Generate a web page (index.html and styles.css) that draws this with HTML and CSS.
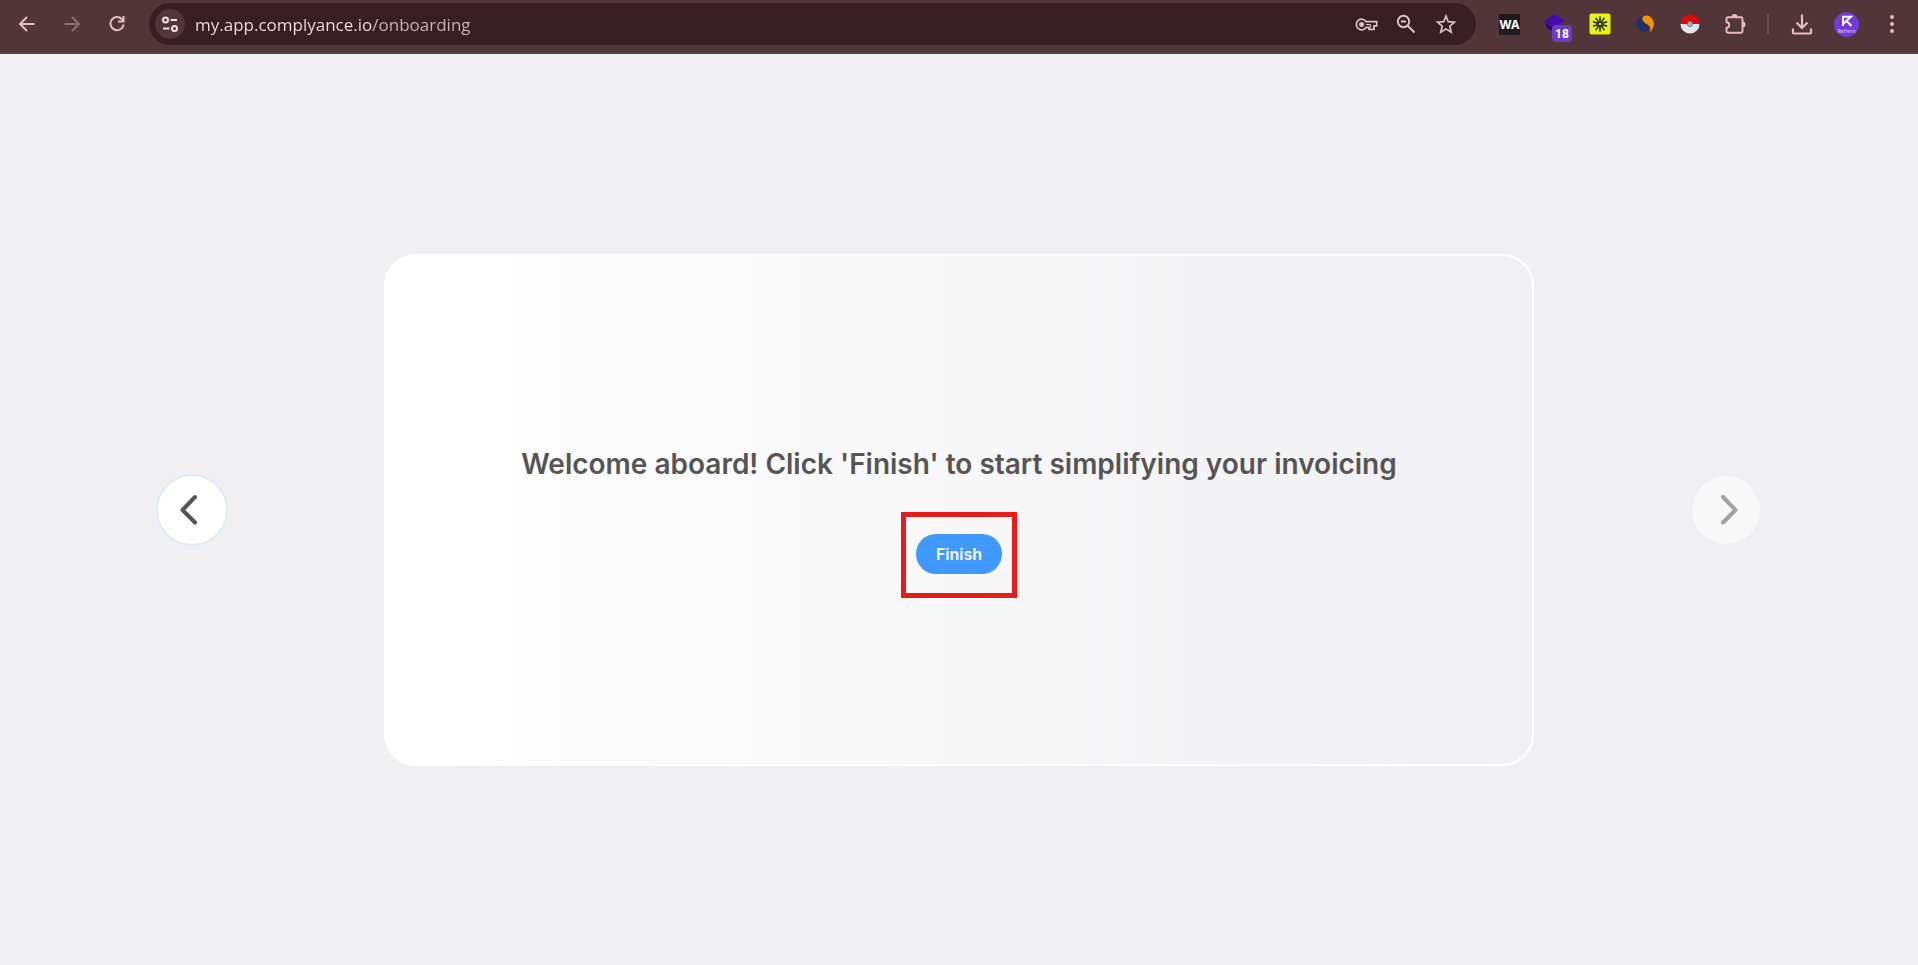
FILE: index.html
```html
<!DOCTYPE html>
<html lang="en">
<head>
<meta charset="utf-8">
<title>Onboarding</title>
<link rel="stylesheet" href="styles.css">
</head>
<body>
<header class="toolbar">
    <button class="tool-btn" aria-label="Back">
        <svg width="24" height="24" viewBox="0 0 24 24"><path d="M19.5 12H5.5M12 5l-7 7 7 7" fill="none" stroke="currentColor" stroke-width="2"/></svg>
    </button>
    <button class="tool-btn dim" aria-label="Forward" disabled>
        <svg width="24" height="24" viewBox="0 0 24 24"><path d="M4.5 12h14M12 5l7 7-7 7" fill="none" stroke="currentColor" stroke-width="2"/></svg>
    </button>
    <button class="tool-btn" aria-label="Reload">
        <svg width="24" height="24" viewBox="0 0 24 24"><path d="M18.6 12.5a6.600 6.600 0 1 1-1.800-5.500l2 2" fill="none" stroke="currentColor" stroke-width="2"/><path d="M19.5 4v6.500H13v-2h4.500V4z" fill="currentColor"/></svg>
    </button>

    <div class="omnibox">
        <button class="site-info" aria-label="Site information">
            <svg width="18" height="18" viewBox="0 0 18 18" fill="none" stroke="currentColor" stroke-width="2"><circle cx="4.5" cy="5" r="2.5"/><path d="M9.5 5H16M2 13.5h6.5"/><circle cx="13.5" cy="13.5" r="2.5"/></svg>
        </button>
        <input class="url" type="text" aria-label="Address" value="my.app.complyance.io/onboarding" spellcheck="false">
        <button class="omni-btn" aria-label="Passwords">
            <svg width="24" height="24" viewBox="0 0 24 24"><path d="M12.2 9.7A5.3 5.3 0 1 0 12.2 15.3H15v2h5v-3.5h2.700V9.7z" fill="none" stroke="currentColor" stroke-width="1.7"/><circle cx="7.6" cy="12.5" r="2.5" fill="currentColor"/><path d="M12 12.5h4.500v3" fill="none" stroke="currentColor" stroke-width="1"/></svg>
        </button>
        <button class="omni-btn" aria-label="Zoom">
            <svg width="24" height="24" viewBox="0 0 24 24" fill="none" stroke="currentColor" stroke-width="1.9"><circle cx="9.5" cy="9.5" r="5.7"/><path d="M13.5 13.5l7 7M7 9.5h5"/></svg>
        </button>
        <button class="omni-btn" aria-label="Bookmark">
            <svg width="24" height="24" viewBox="0 0 24 24"><path d="M12 4l2.300 5.700 6.100.5-4.600 4 1.400 5.900L12 16.900l-5.200 3.200 1.400-5.900-4.600-4 6.100-.5z" fill="none" stroke="currentColor" stroke-width="1.7"/></svg>
        </button>
    </div>

    <div class="extensions">
        <button class="tool-btn" aria-label="WA extension"><span class="wa-icon">WA</span></button>
        <button class="tool-btn" aria-label="Layers extension">
            <svg width="24" height="24" viewBox="0 0 24 24"><path d="M2.5 11l9 5 8-4v3l-8 5-8-4z" fill="#300487"/><path d="M11 2l10.500 6.500L12 15.500 1 9.500z" fill="#4a05b4"/></svg>
            <span class="ext-badge">18</span>
        </button>
        <button class="tool-btn" aria-label="Spark extension">
            <svg width="22" height="22" viewBox="0 0 22 22"><rect x=".5" y=".5" width="21" height="21" rx="2" fill="#e6f60e"/><path d="M11 3.500v15M6.600 4.900l8.800 12.200M15.400 4.900L6.600 17.100M3.900 8.700l14.200 4.600M18.100 8.700L3.900 13.300" fill="none" stroke="#20220d" stroke-width="1.6"/><circle cx="11" cy="11" r="1.2" fill="#e6f60e"/></svg>
        </button>
        <button class="tool-btn" aria-label="Swirl extension">
            <svg width="20" height="20" viewBox="0 0 20 20"><path d="M6.500 2C1 4 0 9 1.500 13s7 6.500 11 4c2-1.500 2-4.500 0-6C9.500 9 5 7.500 6.500 2z" fill="#26305f"/><path d="M7.500 4C8 1 13 .5 16 3.500c4.500 4 3.500 11-1.500 15 2-4 .5-6.500-2-8C9.500 9 7 7 7.500 4z" fill="#f39208"/></svg>
        </button>
        <button class="tool-btn" aria-label="Ball extension">
            <svg width="20" height="20" viewBox="0 0 20 20"><path d="M.5 10a9.500 9.500 0 0 1 19 0z" fill="#dc0b0b"/><path d="M.5 10a9.500 9.500 0 0 0 19 0z" fill="#dfe7ec"/><circle cx="10" cy="10" r="2.5" fill="#cfd8dc" stroke="#5f6b70"/><circle cx="10" cy="10" r="1" fill="#78868c"/></svg>
        </button>
        <button class="tool-btn" aria-label="Extensions">
            <svg width="24" height="24" viewBox="0 0 24 24"><path d="M5 5.200h13a1.500 1.500 0 0 1 1.500 1.500v12.600a1.500 1.500 0 0 1-1.500 1.500H5a1.500 1.500 0 0 1-1.500-1.500v-3.500c3.700-.3 3.700-5.300 0-5.600V6.700A1.500 1.500 0 0 1 5 5.200z" fill="none" stroke="currentColor" stroke-width="1.9"/><path d="M8.500 5a3 3 0 0 1 6 0zM19.500 9.500a3 3 0 0 1 0 6z" fill="currentColor"/></svg>
        </button>
    </div>
    <span class="divider"></span>
    <button class="tool-btn" aria-label="Downloads">
        <svg width="24" height="24" viewBox="0 0 24 24" fill="none" stroke="currentColor" stroke-width="2.2"><path d="M12 2.500v13M6.500 10.500l5.500 5.500 5.500-5.500M3 16.500v4.300q0 .7.7.7h16.600q.7 0 .7-.7v-4.300"/></svg>
    </button>
    <button class="tool-btn" aria-label="Profile">
        <span class="avatar">
            <svg width="12" height="12" viewBox="0 0 12 12" fill="none" stroke="#fff" stroke-width="2"><path d="M2 11V1.800h8L2.500 8.500M5.500 6l5 5"/></svg>
            <span class="avatar-name">Refrens</span>
        </span>
    </button>
    <button class="tool-btn" aria-label="Menu">
        <svg width="24" height="24" viewBox="0 0 24 24" fill="currentColor"><circle cx="12" cy="5" r="2"/><circle cx="12" cy="12" r="2"/><circle cx="12" cy="19" r="2"/></svg>
    </button>
</header>

<main class="onboarding">
    <button class="arrow-btn" aria-label="Previous">
        <svg width="32" height="32" viewBox="0 0 32 32"><path d="M19 3L6.500 16 19 28.500"/></svg>
    </button>
    <section class="card">
        <h1 class="title">Welcome aboard! Click 'Finish' to start simplifying your invoicing</h1>
        <div class="finish-wrap">
            <button class="finish-btn">Finish</button>
        </div>
    </section>
    <button class="arrow-btn" aria-label="Next" disabled>
        <svg width="32" height="32" viewBox="0 0 32 32"><path d="M13 3l12.500 13L13 28.500"/></svg>
    </button>
</main>
</body>
</html>
```

FILE: styles.css
```css
* {
    box-sizing: border-box;
}

body {
    margin: 0;
    min-height: 100vh;
    display: flex;
    flex-direction: column;
    background: #f0f0f2;
    font-family: Inter, "Liberation Sans", sans-serif;
}

button {
    border: none;
    padding: 0;
    background: none;
    color: inherit;
    font-family: inherit;
    cursor: pointer;
}

svg {
    display: block;
}

/* Browser toolbar */
.toolbar {
    display: flex;
    align-items: center;
    padding: 3px 4px 7px;
    background: #513539;
    border-bottom: 2px solid #534345;
    color: #e8bcc3;
}

.tool-btn {
    position: relative;
    width: 45px;
    height: 42px;
    display: flex;
    align-items: center;
    justify-content: center;
}

.tool-btn.dim {
    color: #8c6d71;
}

.omnibox {
    flex: 1;
    height: 42px;
    margin: 0 11px 0 10px;
    padding: 0 10px 0 6px;
    display: flex;
    align-items: center;
    border-radius: 21px;
    background: #381e22;
    color: #dcc3c6;
}

.site-info {
    width: 30px;
    height: 30px;
    display: flex;
    align-items: center;
    justify-content: center;
    border-radius: 50%;
    background: #513539;
    color: #f3dde0;
}

.url {
    flex: 1;
    min-width: 0;
    height: 30px;
    margin-left: 10px;
    padding: 0;
    border: none;
    outline: none;
    /* host is brighter than the path */
    background: linear-gradient(90deg, #f6e1e4 178px, #cfb5b8 178px);
    -webkit-background-clip: text;
    background-clip: text;
    color: transparent;
    font-family: "Open Sans", "Noto Sans", sans-serif;
    font-size: 17px;
}

.omni-btn {
    width: 40px;
    height: 42px;
    display: flex;
    align-items: center;
    justify-content: center;
}

.extensions {
    display: flex;
}

.wa-icon {
    width: 21px;
    height: 21px;
    background: #1c1c1c;
    color: #fff;
    font-size: 12px;
    line-height: 21px;
    font-weight: 700;
}

.ext-badge {
    position: absolute;
    right: 5px;
    bottom: 3px;
    width: 20px;
    height: 17px;
    border-radius: 4px;
    background: #6d3cc4;
    color: #fff;
    font-family: Roboto, sans-serif;
    font-size: 12px;
    line-height: 18px;
    font-weight: 700;
}

.divider {
    width: 2px;
    height: 20px;
    margin: 0 10px;
    background: #6e4c51;
}

.avatar {
    width: 25px;
    height: 25px;
    display: flex;
    flex-direction: column;
    align-items: center;
    padding-top: 3px;
    border-radius: 50%;
    background: #7439d8;
}

.avatar-name {
    color: #d9c4fa;
    font-size: 5px;
    line-height: 8px;
}

/* Onboarding step */
.onboarding {
    flex: 1;
    display: grid;
    grid-template-columns: 1fr 60% 1fr;
    align-items: center;
    justify-items: center;
}

.card {
    width: 100%;
    min-height: 512px;
    padding-bottom: 2px;
    display: flex;
    flex-direction: column;
    align-items: center;
    justify-content: center;
    gap: 50px;
    border: 2px solid #fff;
    border-radius: 32px;
    background: linear-gradient(90deg, #fff, #f0f0f2);
}

.title {
    margin: 0;
    color: #555;
    font-size: 28px;
    line-height: 40px;
    font-weight: 600;
    text-align: center;
}

.finish-wrap {
    position: relative;
    display: flex;
}

/* highlight frame around the button */
.finish-wrap::after {
    content: "";
    position: absolute;
    inset: -22px -15px -24px;
    border: 5px solid #e81b1b;
    pointer-events: none;
}

.finish-btn {
    height: 40px;
    padding: 0 20px;
    border-radius: 20px;
    background: #3f99ff;
    color: #fff;
    font-size: 16px;
    font-weight: 600;
}

.arrow-btn {
    width: 72px;
    height: 72px;
    display: flex;
    align-items: center;
    justify-content: center;
    border: 2px solid #deeaff;
    border-radius: 50%;
    background: #fff;
}

.arrow-btn path {
    fill: none;
    stroke: #555;
    stroke-width: 4;
    stroke-linecap: round;
    stroke-linejoin: round;
}

.arrow-btn:disabled {
    border-color: #e9effb;
    background: #f8f8f8;
    cursor: default;
}

.arrow-btn:disabled path {
    stroke: #a2a2a2;
}
```
